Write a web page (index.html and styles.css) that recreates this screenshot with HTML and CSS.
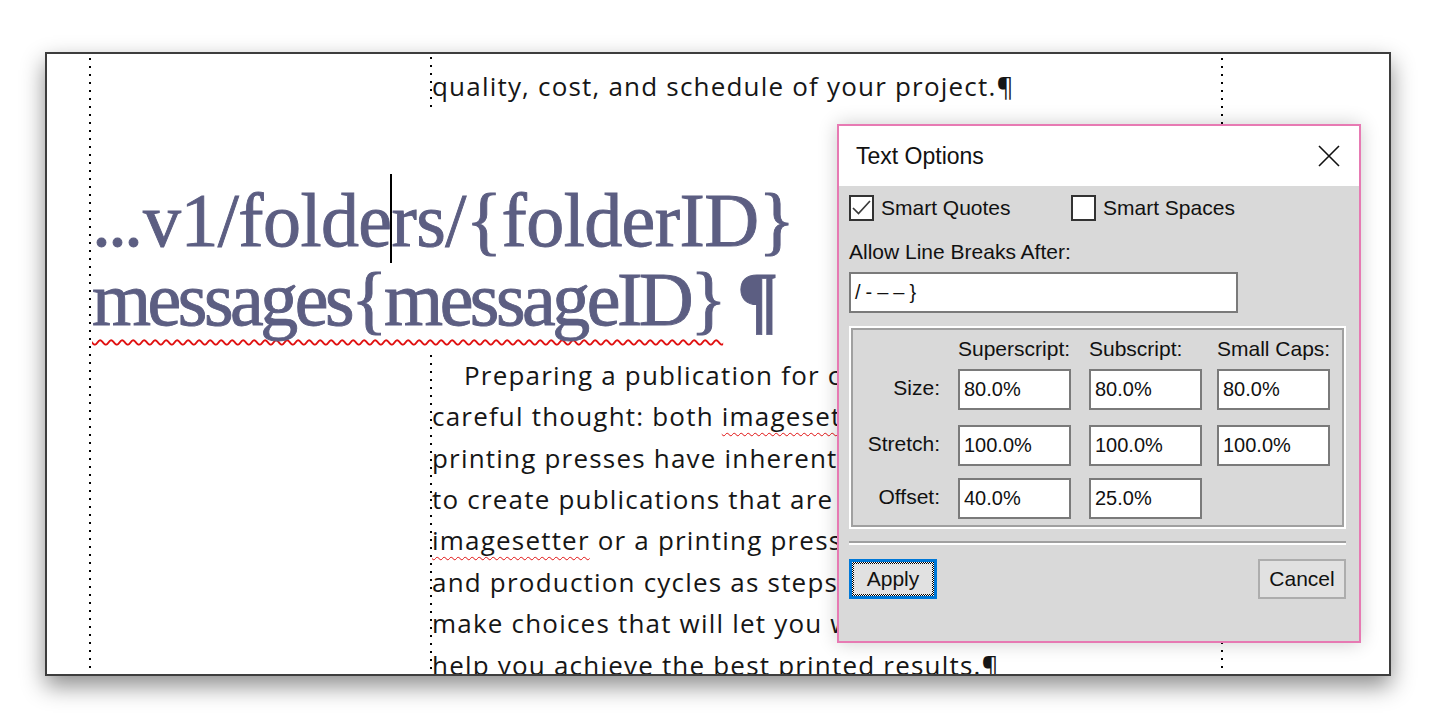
FILE: index.html
```html
<!DOCTYPE html>
<html>
<head>
<meta charset="utf-8">
<title>Text Options</title>
<link rel="stylesheet" href="styles.css">
</head>
<body>
<div class="frame">
  <div class="guide guide-left"></div>
  <div class="guide guide-right"></div>
  <div class="doc">
    <div class="para para-top">
      <div class="ln ln0">select tools, vendors and media, and the overall</div>
      <div class="ln">quality, cost, and schedule of your project.¶</div>
    </div>
    <h1 class="head"><span class="l1"><span class="dots">...</span>v1/folde<span class="caret"></span>rs/{folderID}</span><br><span class="l2"><span class="sq">messages{messageID}</span><span class="pil">¶</span></span></h1>
    <div class="para para-body">
      <div class="ln indent">Preparing a publication for commercial printing</div>
      <div class="ln">careful thought: both <span class="spell">imagesetters</span> and commercial</div>
      <div class="ln">printing presses have inherent limitations. If you</div>
      <div class="ln">to create publications that are printed on an</div>
      <div class="ln"><span class="spell">imagesetter</span> or a printing press, think of the design</div>
      <div class="ln">and production cycles as steps in a process. You</div>
      <div class="ln">make choices that will let you work efficiently and</div>
      <div class="ln">help you achieve the best printed results.¶</div>
    </div>
  </div>
</div>

<div class="dialog">
  <div class="titlebar">
    <span class="title">Text Options</span>
    <svg class="close" width="22" height="22" viewBox="0 0 22 22"><path d="M1 1 L21 21 M21 1 L1 21" stroke="#111" stroke-width="1.6" fill="none"/></svg>
  </div>
  <div class="dbody">
    <div class="checks">
      <div class="chk chk-first">
        <span class="box"><svg width="21" height="21" viewBox="0 0 21 21"><path d="M2 11 L7.5 16.5 L19 4" stroke="#3a3a3a" stroke-width="1.7" fill="none"/></svg></span>
        <span class="clabel">Smart Quotes</span>
      </div>
      <div class="chk">
        <span class="box"></span>
        <span class="clabel">Smart Spaces</span>
      </div>
    </div>
    <div class="lbl">Allow Line Breaks After:</div>
    <div class="txtin">/-––}</div>
    <div class="group">
      <div class="grow ghead">
        <span class="rl"></span>
        <span class="c c1">Superscript:</span>
        <span class="c c2">Subscript:</span>
        <span class="c c3">Small Caps:</span>
      </div>
      <div class="grow">
        <span class="rl">Size:</span>
        <span class="c c1"><span class="fld">80.0%</span></span>
        <span class="c c2"><span class="fld">80.0%</span></span>
        <span class="c c3"><span class="fld">80.0%</span></span>
      </div>
      <div class="grow r2">
        <span class="rl">Stretch:</span>
        <span class="c c1"><span class="fld">100.0%</span></span>
        <span class="c c2"><span class="fld">100.0%</span></span>
        <span class="c c3"><span class="fld">100.0%</span></span>
      </div>
      <div class="grow r3">
        <span class="rl">Offset:</span>
        <span class="c c1"><span class="fld">40.0%</span></span>
        <span class="c c2"><span class="fld">25.0%</span></span>
        <span class="c c3"></span>
      </div>
    </div>
    <div class="sep"></div>
    <div class="buttons">
      <div class="btn btn-apply"><div class="focus"><div class="face">Apply</div></div></div>
      <div class="btn btn-cancel">Cancel</div>
    </div>
  </div>
</div>
</body>
</html>
```

FILE: styles.css
```css
* { box-sizing: border-box; }
html, body { margin: 0; padding: 0; background: #fff; }
body {
  width: 1437px;
  height: 728px;
  overflow: hidden;
  position: relative;
  font-family: "Liberation Sans", Arial, sans-serif;
}

/* document window */
.frame {
  position: relative;
  margin: 52px 0 0 45px;
  width: 1346px;
  height: 624px;
  border: 2px solid #3d3d3d;
  background: #fff;
  overflow: hidden;
  box-shadow: 0 10px 22px rgba(0, 0, 0, 0.45);
}
.guide {
  position: absolute;
  top: 4px;
  bottom: 0;
  width: 2px;
  background-image: linear-gradient(#000 2px, transparent 2px);
  background-size: 2px 8px;
}
.guide-left { left: 42px; }
.guide-right { left: 1174px; }

.doc { padding-left: 45px; }

.para {
  margin-left: 338px;
  padding-left: 2px;
  font-family: "Open Sans", sans-serif;
  font-size: 26px;
  line-height: 41.4px;
  letter-spacing: 1.2px;
  color: #161616;
  white-space: nowrap;
  background-image: linear-gradient(#000 2px, transparent 2px);
  background-size: 2px 8px;
  background-repeat: repeat-y;
}
.para-top { margin-top: -34px; background-position: 0 5px; }
.ln0 { margin-bottom: 5px; }
.para-body { margin-top: 19px; }
.indent { padding-left: 32px; }
.spell {
  text-decoration: underline wavy #e01010;
  text-decoration-thickness: 1.2px;
  text-decoration-skip-ink: none;
  text-underline-offset: 6px;
}

.head {
  margin: 66px 0 0;
  font-family: "Liberation Serif", "Times New Roman", serif;
  font-weight: normal;
  font-size: 76px;
  line-height: 73px;
  color: #5c5e82;
  -webkit-text-stroke: 0.9px #5c5e82;
  white-space: nowrap;
}
.l1 { letter-spacing: -0.6px; }
.dots { letter-spacing: -3px; margin-right: 3px; }
.l2 { letter-spacing: -3.5px; }
.sq {
  text-decoration: underline wavy #e01010;
  text-decoration-thickness: 1.5px;
  text-decoration-skip-ink: none;
  text-underline-offset: 14px;
}
.pil { font-weight: bold; margin-left: 14px; letter-spacing: 0; }
.caret {
  display: inline-block;
  width: 2px;
  height: 89px;
  background: #000;
  vertical-align: -17px;
  margin: 0 -1px;
}

/* dialog */
.dialog {
  position: absolute;
  left: 837px;
  top: 124px;
  width: 524px;
  height: 519px;
  border: 2px solid #e77ab3;
  background: #d9d9d9;
  box-shadow: 0 0 18px rgba(0, 0, 0, 0.2);
  color: #111;
  font-size: 21px;
}
.titlebar {
  height: 60px;
  background: #fff;
  display: flex;
  align-items: center;
  justify-content: space-between;
  padding: 0 19px 0 17px;
}
.title { font-size: 23px; }
.close { display: block; }

.dbody { padding: 9px 13px 0 10px; }

.checks { display: flex; height: 26px; align-items: center; }
.chk { display: flex; align-items: center; }
.chk-first { width: 222px; }
.box {
  width: 25px;
  height: 26px;
  border: 2px solid #333;
  background: #fff;
  display: block;
}
.box svg { display: block; }
.clabel { margin-left: 7px; }

.lbl { margin-top: 18px; line-height: 26px; }
.txtin {
  margin-top: 7px;
  width: 389px;
  height: 41px;
  border: 2px solid #7a7a7a;
  background: #fff;
  padding-left: 4px;
  font-size: 20px;
  line-height: 37px;
  letter-spacing: 5px;
}

.group {
  margin-top: 13px;
  width: 497px;
  height: 203px;
  border: 2px solid #fff;
  box-shadow: inset 0 0 0 2px #a0a0a0;
}
.grow { display: flex; height: 41px; align-items: center; white-space: nowrap; }
.r2 { margin-top: 15px; }
.r3 { margin-top: 12px; }
.rl { width: 107px; text-align: right; padding-right: 18px; padding-bottom: 3px; }
.c1 { width: 131px; }
.c2 { width: 128px; }
.c3 { width: 113px; }
.ghead .c { line-height: 41px; }
.fld {
  display: block;
  width: 113px;
  height: 41px;
  border: 2px solid #7a7a7a;
  background: #fff;
  padding-left: 4px;
  font-size: 20px;
  line-height: 36px;
}

.sep {
  margin-top: 12px;
  width: 497px;
  border-top: 2px solid #a0a0a0;
  border-bottom: 2px solid #fff;
}
.buttons {
  margin-top: 14px;
  width: 497px;
  display: flex;
  justify-content: space-between;
}
.btn {
  width: 88px;
  height: 40px;
  background: #e1e1e1;
}
.btn-apply { border: 3px solid #0078d7; }
.focus {
  height: 100%;
  padding: 2px;
  background: repeating-conic-gradient(#000 0 25%, #fff 0 50%) 0 0 / 2px 2px;
}
.face {
  height: 100%;
  background: #e1e1e1;
  display: flex;
  align-items: center;
  justify-content: center;
}
.btn-cancel {
  border: 2px solid #adadad;
  display: flex;
  align-items: center;
  justify-content: center;
}
```
